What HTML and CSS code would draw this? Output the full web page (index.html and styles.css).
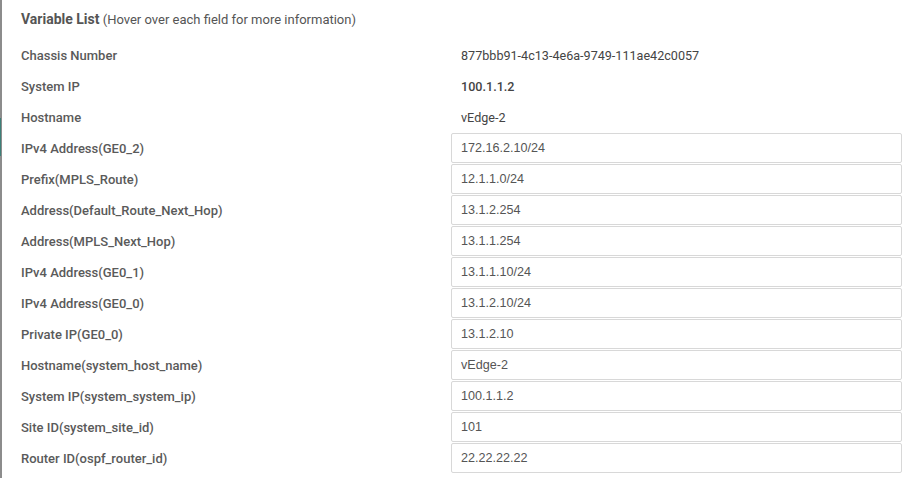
FILE: index.html
```html
<!DOCTYPE html>
<html lang="en">
<head>
    <meta charset="UTF-8">
    <meta name="viewport" content="width=device-width, initial-scale=1.0">
    <title>Variable List</title>
    <link rel="stylesheet" href="styles.css">
</head>
<body>
    <div class="panel">
        <div class="side-mark"></div>
        <h3 class="title"><b>Variable List</b> (Hover over each field for more information)</h3>

        <div class="var-list">
            <div class="var-row">
                <label class="var-name">Chassis Number</label>
                <div class="var-value">877bbb91-4c13-4e6a-9749-111ae42c0057</div>
            </div>
            <div class="var-row">
                <label class="var-name">System IP</label>
                <div class="var-value strong">100.1.1.2</div>
            </div>
            <div class="var-row">
                <label class="var-name">Hostname</label>
                <div class="var-value">vEdge-2</div>
            </div>
            <div class="var-row">
                <label class="var-name">IPv4 Address(GE0_2)</label>
                <input class="var-input" type="text" value="172.16.2.10/24">
            </div>
            <div class="var-row">
                <label class="var-name">Prefix(MPLS_Route)</label>
                <input class="var-input" type="text" value="12.1.1.0/24">
            </div>
            <div class="var-row">
                <label class="var-name">Address(Default_Route_Next_Hop)</label>
                <input class="var-input" type="text" value="13.1.2.254">
            </div>
            <div class="var-row">
                <label class="var-name">Address(MPLS_Next_Hop)</label>
                <input class="var-input" type="text" value="13.1.1.254">
            </div>
            <div class="var-row">
                <label class="var-name">IPv4 Address(GE0_1)</label>
                <input class="var-input" type="text" value="13.1.1.10/24">
            </div>
            <div class="var-row">
                <label class="var-name">IPv4 Address(GE0_0)</label>
                <input class="var-input" type="text" value="13.1.2.10/24">
            </div>
            <div class="var-row">
                <label class="var-name">Private IP(GE0_0)</label>
                <input class="var-input" type="text" value="13.1.2.10">
            </div>
            <div class="var-row">
                <label class="var-name">Hostname(system_host_name)</label>
                <input class="var-input" type="text" value="vEdge-2">
            </div>
            <div class="var-row">
                <label class="var-name">System IP(system_system_ip)</label>
                <input class="var-input" type="text" value="100.1.1.2">
            </div>
            <div class="var-row">
                <label class="var-name">Site ID(system_site_id)</label>
                <input class="var-input" type="text" value="101">
            </div>
            <div class="var-row">
                <label class="var-name">Router ID(ospf_router_id)</label>
                <input class="var-input" type="text" value="22.22.22.22">
            </div>
        </div>
    </div>
</body>
</html>
```

FILE: styles.css
```css
html, body {
    margin: 0;
    padding: 0;
    background: #fff;
}

body {
    font-family: Roboto, "Liberation Sans", Arial, sans-serif;
    color: #555;
    overflow: hidden;
}

.panel {
    position: relative;
    height: 478px;
    border-left: 2px solid #8c8c8c;
    padding: 0 4px 0 19px;
    box-sizing: border-box;
}

/* little teal tab on the left edge */
.side-mark {
    position: absolute;
    left: -2px;
    top: 118px;
    width: 1px;
    height: 38px;
    background: #3d7f78;
}

.title {
    margin: 0;
    height: 40px;
    line-height: 39px;
    font-size: 13px;
    font-weight: normal;
    color: #555;
}

.title b {
    font-size: 14px;
    font-weight: 700;
}

.var-list {
    display: flex;
    flex-direction: column;
    gap: 1px;
}

.var-row {
    display: grid;
    grid-template-columns: 430px 1fr;
    height: 30px;
    align-items: center;
}

.var-name {
    font-size: 13px;
    font-weight: 500;
    color: #5a5a5a;
}

.var-value {
    padding-left: 10px;
    font-size: 12.6px;
    color: #444;
}

.var-value.strong {
    font-weight: 500;
}

.var-input {
    height: 30px;
    box-sizing: border-box;
    margin: 0;
    border: 1px solid #d8d8d8;
    border-radius: 2px;
    padding: 0 9px;
    font-family: "Liberation Sans", Arial, sans-serif;
    font-size: 12.6px;
    color: #555;
    background: #fff;
    outline: none;
}
```
